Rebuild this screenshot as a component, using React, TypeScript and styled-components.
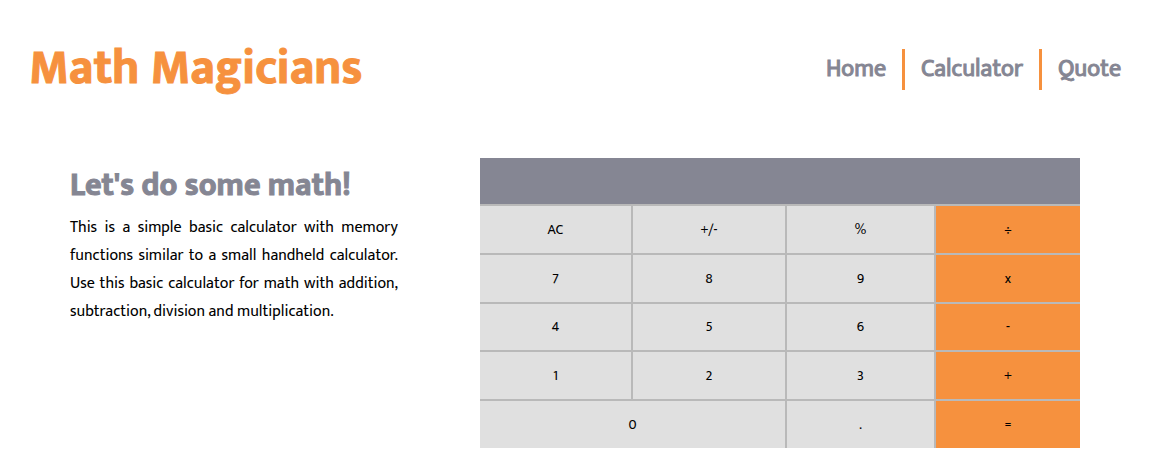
import React, { useState } from 'react';
import styled, { createGlobalStyle } from 'styled-components';

const orange = '#f6913e';
const slate = '#858693';

const GlobalStyle = createGlobalStyle`
  *, *::before, *::after { box-sizing: border-box; }
  body {
    margin: 0;
    background: #fff;
    color: #000;
    font-family: Mukta, "Noto Sans CJK JP", "Noto Sans", sans-serif;
  }
`;

const Header = styled.header`
  display: flex;
  flex-wrap: wrap;
  align-items: center;
  justify-content: space-between;
  padding: 29px 29px 30px;
`;

const Brand = styled.h1`
  margin: 0;
  color: ${orange};
  font-size: 48px;
  line-height: 81px;
  font-weight: 700;
  -webkit-text-stroke: 1px ${orange};
`;

const NavList = styled.ul`
  display: flex;
  margin: 0;
  padding: 0;
  list-style: none;
`;

const NavItem = styled.li`
  padding: 0 16px;

  & + & { border-left: 3px solid ${orange}; }
  &:last-child { padding-right: 0; }
`;

const NavLink = styled.a`
  display: block;
  color: ${slate};
  font-size: 24px;
  line-height: 41px;
  font-weight: 400;
  -webkit-text-stroke: 1px ${slate};
  text-decoration: none;
`;

const Main = styled.main`
  display: flex;
  justify-content: space-between;
  align-items: flex-start;
  gap: 82px;
  padding: 18px 70px 28px;
`;

const Intro = styled.section`
  flex: 328 1 0;
`;

const IntroTitle = styled.h2`
  margin: 0;
  color: ${slate};
  font-size: 32px;
  line-height: 56px;
  font-weight: 700;
  -webkit-text-stroke: 1px ${slate};
`;

const IntroText = styled.p`
  margin: 0;
  font-size: 16px;
  line-height: 28px;
  text-align: justify;
`;

const Pad = styled.section`
  flex: 600 1 0;
  display: grid;
  grid-template-columns: 151fr 152fr 147fr 144fr;
  grid-template-rows: 46fr 47fr 47fr 46fr 47fr 47fr;
  gap: 2px;
  min-height: 290px;
  background: #b9b9b9;
`;

const Display = styled.output`
  grid-column: 1 / -1;
  display: flex;
  align-items: center;
  justify-content: flex-end;
  padding: 0 16px;
  background: ${slate};
  color: #fff;
  font-size: 24px;
  line-height: 28px;
`;

const Key = styled.button<{ $operator?: boolean; $wide?: boolean }>`
  grid-column: span ${({ $wide }) => ($wide ? 2 : 1)};
  margin: 0;
  padding: 0;
  border: 0;
  background: ${({ $operator }) => ($operator ? orange : '#e0e0e0')};
  color: #000;
  font-family: inherit;
  font-size: 14px;
  line-height: 20px;
  cursor: pointer;
`;

const links = ['Home', 'Calculator', 'Quote'];

const keys = [
  'AC', '+/-', '%', '÷',
  '7', '8', '9', 'x',
  '4', '5', '6', '-',
  '1', '2', '3', '+',
  '0', '.', '=',
];

const operators = ['÷', 'x', '-', '+', '='];

export default function App() {
  const [value, setValue] = useState('');

  const press = (key: string) => {
    if (key === 'AC') setValue('');
    else if (/^[0-9.]$/.test(key)) setValue((current) => current + key);
  };

  return (
    <>
      <GlobalStyle />
      <Header>
        <Brand>Math Magicians</Brand>
        <nav>
          <NavList>
            {links.map((link) => (
              <NavItem key={link}>
                <NavLink href={`#${link.toLowerCase()}`}>{link}</NavLink>
              </NavItem>
            ))}
          </NavList>
        </nav>
      </Header>
      <Main>
        <Intro>
          <IntroTitle>Let's do some math!</IntroTitle>
          <IntroText>
            This is a simple basic calculator with memory functions similar to a small
            handheld calculator. Use this basic calculator for math with addition,
            subtraction, division and multiplication.
          </IntroText>
        </Intro>
        <Pad aria-label="Calculator">
          <Display aria-label="Result">{value}</Display>
          {keys.map((key) => (
            <Key
              key={key}
              type="button"
              $operator={operators.includes(key)}
              $wide={key === '0'}
              onClick={() => press(key)}
            >
              {key}
            </Key>
          ))}
        </Pad>
      </Main>
    </>
  );
}
